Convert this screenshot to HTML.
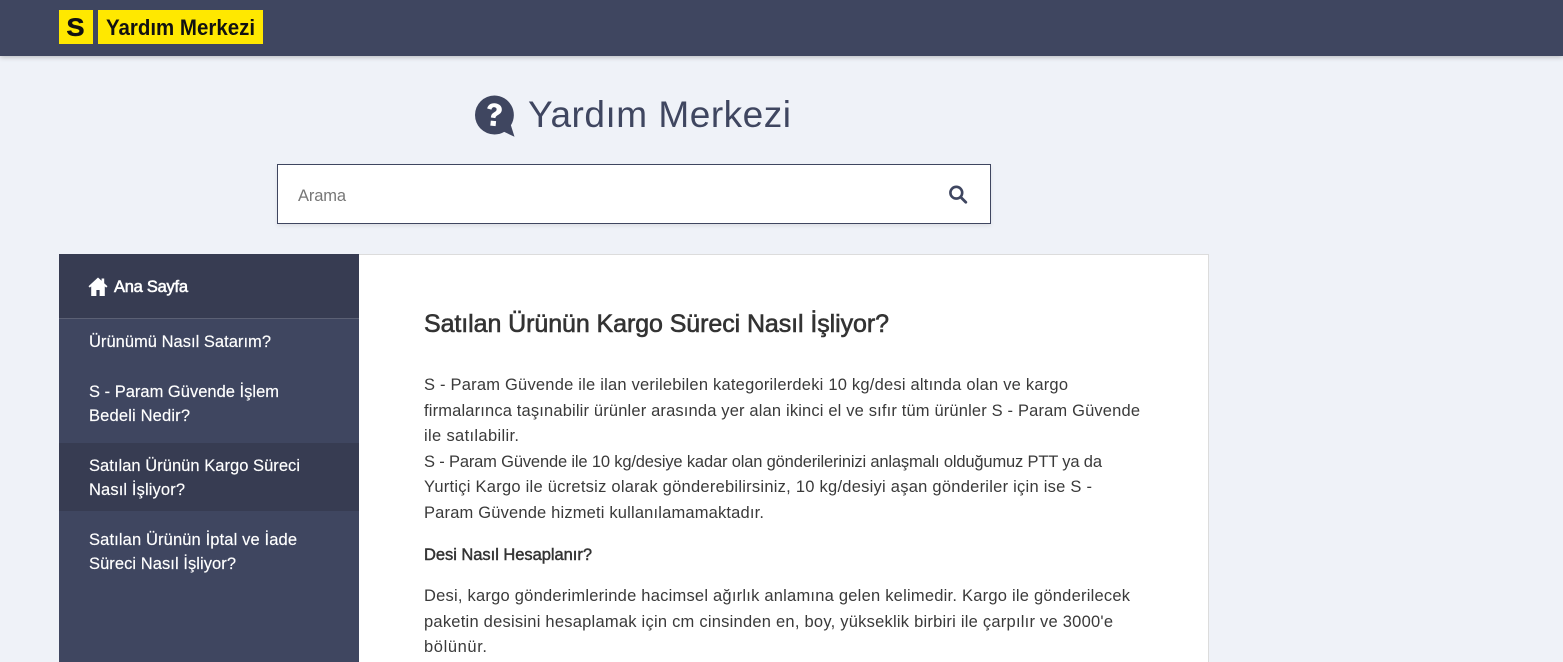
<!DOCTYPE html>
<html lang="tr">
<head>
<meta charset="utf-8">
<title>Yardım Merkezi</title>
<style>
html,body{margin:0;padding:0;background:#eff2f8;width:1563px;height:662px;overflow:hidden}
body{position:relative;font-family:"Liberation Sans",sans-serif}
.b{position:absolute;box-sizing:border-box}
svg.t{position:absolute;left:0;top:0}
svg.t text{font-family:"Liberation Sans",sans-serif;white-space:pre}
.nav text{font-size:16.5px;fill:#fff;stroke:#fff;stroke-width:.15px}
.p text{font-size:16.5px;fill:#3a3a3a}
.p text.s{fill:#333;stroke:#333;stroke-width:.45px}
.nav text.s{stroke-width:.55px}
</style>
</head>
<body>
<div class="b" style="left:0;top:0;width:1563px;height:56px;background:#3f4660;box-shadow:0 1px 5px rgba(0,0,0,.25)"></div>
<div class="b" style="left:59px;top:10px;width:34px;height:34px;background:#ffe800"></div>
<div class="b" style="left:98px;top:10px;width:165px;height:34px;background:#ffe800"></div>
<div class="b" style="left:277px;top:164px;width:714px;height:60px;background:#fff;border:1px solid #3f4660;box-shadow:0 2px 4px rgba(0,0,0,.08)"></div>
<div class="b" style="left:359px;top:254px;width:850px;height:420px;background:#fff;border:1px solid #dcdcdc;border-left:0"></div>
<div class="b" style="left:59px;top:254px;width:300px;height:420px;background:#3f4660"></div>
<div class="b" style="left:59px;top:254px;width:300px;height:65px;background:#373c52;border-bottom:1px solid #5b6074"></div>
<div class="b" style="left:59px;top:443px;width:300px;height:68px;background:#373c52"></div>

<svg class="t" width="1563" height="662" viewBox="0 0 1563 662" xmlns="http://www.w3.org/2000/svg">
  <text x="66.500" y="36" font-size="25" font-weight="700" fill="#111" stroke="#111" stroke-width=".5" textLength="18" lengthAdjust="spacingAndGlyphs">S</text>
  <text x="106" y="35" font-size="22" font-weight="700" fill="#111" textLength="149" lengthAdjust="spacingAndGlyphs">Yardım Merkezi</text>

  <!-- help icon -->
  <path d="M494.500 95.500a19.500 19.500 0 1 0 0 39c3.500 0 6.800-.9 9.700-2.600l10.300 4.900-3.600-11.500a19.500 19.500 0 0 0-16.400-29.800z" fill="#3f4660"/>
  <path d="M487.200 108.500c.9-3.700 3.800-5.600 7.700-5.200 4.400.4 7.300 3.100 6.900 6.800-.3 2.500-1.900 3.800-3.900 4.900-1.700 1-2.300 1.600-2.500 3.100l-4.500-.6c.1-2.800 1.300-4.100 3.400-5.300 1.500-.8 2.200-1.500 2.300-2.600.2-1.300-.7-2.300-2.100-2.400-1.500-.2-2.600.6-3.100 2.400z" fill="#fff"/>
  <path d="M490.800 120.600l5.300.5-.5 5-5.300-.5z" fill="#fff"/>

  <text x="528" y="127" font-size="37" fill="#3f4660" textLength="263" lengthAdjust="spacing">Yardım Merkezi</text>
  <text x="298" y="201" font-size="16.500" fill="#777" textLength="48" lengthAdjust="spacing">Arama</text>

  <!-- search icon -->
  <circle cx="956.300" cy="192.700" r="5.900" fill="none" stroke="#3f4660" stroke-width="2.600"/>
  <path d="M960.800 197.200l5 5" fill="none" stroke="#3f4660" stroke-width="2.800" stroke-linecap="round"/>

  <!-- home icon -->
  <path d="M98 277.500l-9.500 8.700 1.300 1.400 1.400-1.200v9.600h5.200v-6h3.200v6h5.200v-9.600l1.400 1.200 1.300-1.400-3.300-3v-4.700h-2.600v2.300z" fill="#fff"/>

  <g class="nav">
    <text class="s" x="114" y="292" textLength="74" lengthAdjust="spacing">Ana Sayfa</text>
    <text x="89" y="347" textLength="182" lengthAdjust="spacing">Ürünümü Nasıl Satarım?</text>
    <text x="89" y="397" textLength="190" lengthAdjust="spacing">S - Param Güvende İşlem</text>
    <text x="89" y="421" textLength="101" lengthAdjust="spacing">Bedeli Nedir?</text>
    <text x="89" y="471" textLength="211" lengthAdjust="spacing">Satılan Ürünün Kargo Süreci</text>
    <text x="89" y="495" textLength="96" lengthAdjust="spacing">Nasıl İşliyor?</text>
    <text x="89" y="545" textLength="208" lengthAdjust="spacing">Satılan Ürünün İptal ve İade</text>
    <text x="89" y="569" textLength="147" lengthAdjust="spacing">Süreci Nasıl İşliyor?</text>
  </g>

  <text x="424" y="332" font-size="25" fill="#333" stroke="#333" stroke-width=".6" textLength="465" lengthAdjust="spacing">Satılan Ürünün Kargo Süreci Nasıl İşliyor?</text>

  <g class="p">
    <text x="424" y="390" textLength="644" lengthAdjust="spacing">S - Param Güvende ile ilan verilebilen kategorilerdeki 10 kg/desi altında olan ve kargo</text>
    <text x="424" y="416" textLength="716" lengthAdjust="spacing">firmalarınca taşınabilir ürünler arasında yer alan ikinci el ve sıfır tüm ürünler S - Param Güvende</text>
    <text x="424" y="441" textLength="95" lengthAdjust="spacing">ile satılabilir.</text>
    <text x="424" y="467" textLength="678" lengthAdjust="spacing">S - Param Güvende ile 10 kg/desiye kadar olan gönderilerinizi anlaşmalı olduğumuz PTT ya da</text>
    <text x="424" y="492" textLength="668" lengthAdjust="spacing">Yurtiçi Kargo ile ücretsiz olarak gönderebilirsiniz, 10 kg/desiyi aşan gönderiler için ise S -</text>
    <text x="424" y="518" textLength="340" lengthAdjust="spacing">Param Güvende hizmeti kullanılamamaktadır.</text>
    <text class="s" x="424" y="560" textLength="168" lengthAdjust="spacing">Desi Nasıl Hesaplanır?</text>
    <text x="424" y="601" textLength="706" lengthAdjust="spacing">Desi, kargo gönderimlerinde hacimsel ağırlık anlamına gelen kelimedir. Kargo ile gönderilecek</text>
    <text x="424" y="627" textLength="689" lengthAdjust="spacing">paketin desisini hesaplamak için cm cinsinden en, boy, yükseklik birbiri ile çarpılır ve 3000'e</text>
    <text x="424" y="652" textLength="63" lengthAdjust="spacing">bölünür.</text>
  </g>
</svg>
</body>
</html>
